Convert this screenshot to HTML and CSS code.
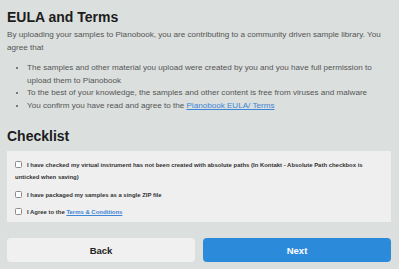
FILE: index.html
```html
<!DOCTYPE html>
<html lang="en">
<head>
  <meta charset="UTF-8">
  <title>EULA and Terms</title>
  <link rel="stylesheet" href="styles.css">
</head>
<body>
  <div class="page">
    <h1>EULA and Terms</h1>
    <p class="intro"><span class="nowrap">By uploading your samples to Pianobook, you are contributing to a community driven sample library. You</span><br>agree that</p>
    <ul class="terms">
      <li>The samples and other material you upload were created by you and you have full permission to upload them to Pianobook</li>
      <li>To the best of your knowledge, the samples and other content is free from viruses and malware</li>
      <li>You confirm you have read and agree to the <a href="#">Pianobook EULA/ Terms</a></li>
    </ul>

    <h2>Checklist</h2>
    <div class="checklist">
      <label class="check-item">
        <input type="checkbox">I have checked my virtual instrument has not been created with absolute paths (In Kontakt - Absolute Path checkbox is unticked when saving)
      </label>
      <label class="check-item">
        <input type="checkbox">I have packaged my samples as a single ZIP file
      </label>
      <label class="check-item">
        <input type="checkbox">I Agree to the <a href="#">Terms &amp; Conditions</a>
      </label>
    </div>

    <div class="actions">
      <button type="button" class="btn btn-back">Back</button>
      <button type="button" class="btn btn-next">Next</button>
    </div>
  </div>
</body>
</html>
```

FILE: styles.css
```css
body {
  margin: 0;
  padding: 0;
  font-family: 'Liberation Sans', Arial, sans-serif;
  background: #dbdfde;
  color: #222;
}

.page {
  padding: 8px 8px 0 7px;
}

h1,
h2 {
  margin: 0;
  font-size: 14px;
  line-height: 18px;
  font-weight: bold;
  color: #1c1c1c;
}

h1 {
  margin-bottom: 3px;
}

h2 {
  margin-top: 15px;
  margin-bottom: 6px;
}

.intro,
.terms {
  font-size: 8.1px;
  line-height: 12.5px;
  color: #555;
}

.intro {
  margin: 0;
}

.nowrap {
  white-space: nowrap;
}

.terms {
  margin: 8px 0 0;
  padding-left: 20px;
}

a {
  color: #3d85d6;
}

.checklist {
  background: #efefef;
  padding: 8px 8px 4px;
  display: flex;
  flex-direction: column;
  gap: 5.5px;
}

.check-item {
  display: block;
  font-size: 5.95px;
  line-height: 12px;
  font-weight: bold;
  color: #333;
}

.check-item input {
  appearance: none;
  width: 7px;
  height: 7px;
  margin: 0 5px 0 0;
  border: 1px solid #8a8a8a;
  border-radius: 1.5px;
  background: #fff;
  vertical-align: -1px;
}

.actions {
  display: flex;
  gap: 8px;
  margin-top: 16px;
}

.btn {
  flex: 1;
  height: 24px;
  border: none;
  border-radius: 4px;
  font-family: inherit;
  font-size: 9.5px;
  font-weight: bold;
  cursor: pointer;
}

.btn-back {
  background: #f0f0f0;
  color: #222;
}

.btn-next {
  background: #2b8ad9;
  color: #fff;
}
```
